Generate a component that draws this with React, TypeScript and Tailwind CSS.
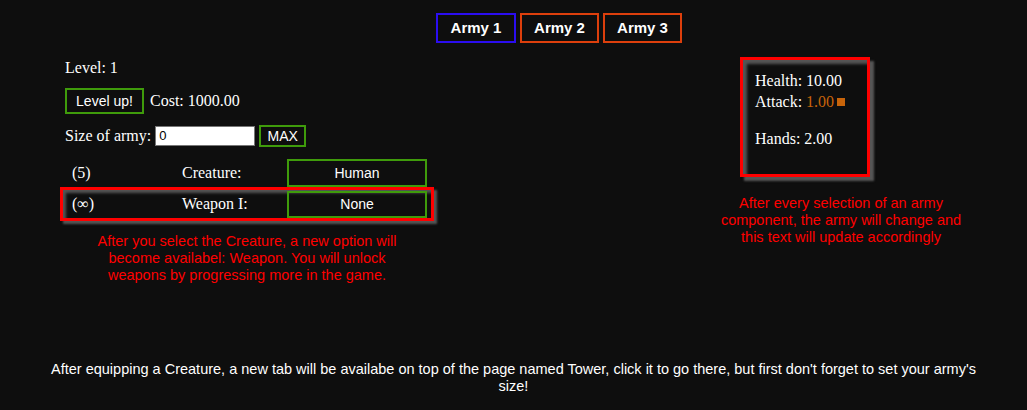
import React from "react";

const serif = { fontFamily: '"Liberation Serif", "Times New Roman", serif' };
const sans = { fontFamily: '"Liberation Sans", Arial, sans-serif' };

export default function App() {
  return (
    <div className="relative w-[1027px] h-[410px] bg-[#0e0e0e] text-white overflow-hidden" style={serif}>
      {/* Tabs */}
      <div className="flex justify-center gap-[4px] pt-[13px] pl-[91px]">
        <div className="w-[80px] h-[30px] border-2 border-[#2b0df0] flex items-center justify-center font-bold text-[15px]" style={sans}>Army 1</div>
        <div className="w-[79px] h-[30px] border-2 border-[#dd3f0c] flex items-center justify-center font-bold text-[15px]" style={sans}>Army 2</div>
        <div className="w-[79px] h-[30px] border-2 border-[#dd3f0c] flex items-center justify-center font-bold text-[15px]" style={sans}>Army 3</div>
      </div>

      <div className="flex">
        {/* Left panel */}
        <div className="ml-[60px] w-[374px]">
          <div className="mt-[16px] pl-[5px] text-[16px] leading-[18px]">Level: 1</div>
          <div className="mt-[11px] pl-[5px] flex items-center gap-[6px]">
            <div className="w-[79px] h-[26px] border-2 border-[#3f9b0b] flex items-center justify-center text-[14px]" style={sans}>Level up!</div>
            <span className="text-[16px]">Cost: 1000.00</span>
          </div>
          <div className="mt-[10px] pl-[5px] flex items-center">
            <span className="text-[16px]">Size of army:</span>
            <div className="ml-[4px] w-[100px] h-[20px] bg-white border border-[#767676] flex items-center pl-[3px] text-black text-[13px]" style={sans}>0</div>
            <div className="ml-[4px] w-[47px] h-[22px] border-2 border-[#3f9b0b] flex items-center justify-center text-[14px]" style={sans}>MAX</div>
          </div>

          <div className="mt-[11px]">
            <div className="flex items-center h-[28px]">
              <span className="pl-[12px] w-[122px] text-[16px]">(5)</span>
              <span className="w-[105px] text-[16px]">Creature:</span>
              <div className="w-[140px] h-[28px] border-2 border-[#3f9b0b] flex items-center justify-center text-[14px]" style={sans}>Human</div>
            </div>
            <div className="w-[374px] h-[34px] border-[3px] border-[#ff0000] shadow-[3px_3px_2px_#555,inset_3px_3px_3px_#555] flex items-center">
              <span className="pl-[9px] w-[119px] text-[16px]">(∞)</span>
              <span className="w-[105px] text-[16px]">Weapon I:</span>
              <div className="w-[140px] h-[27px] border-2 border-[#3f9b0b] flex items-center justify-center text-[14px]" style={sans}>None</div>
            </div>
          </div>

          <div className="mt-[12px] text-center text-[#ff0000] text-[14.5px] leading-[17px] px-[24px]" style={sans}>
            After you select the Creature, a new option will become availabel: Weapon. You will unlock weapons by progressing more in the game.
          </div>
        </div>

        {/* Right panel */}
        <div className="ml-[284px] w-[246px]">
          <div className="ml-[22px] mt-[14px] w-[130px] h-[120px] border-[3px] border-[#ff0000] shadow-[4px_4px_2px_#555,inset_4px_4px_3px_#555] pl-[12px] pt-[10px] text-[16px] leading-[21px]">
            <div>Health: 10.00</div>
            <div className="flex items-center">
              Attack:&nbsp;<span className="text-[#c8640a]">1.00</span>
              <span className="ml-[3px] inline-block w-[8px] h-[8px] bg-[#c8640a]"></span>
            </div>
            <div className="mt-[16px]">Hands: 2.00</div>
          </div>
          <div className="mt-[18px] text-center text-[#ff0000] text-[14.5px] leading-[17px]" style={sans}>
            After every selection of an army component, the army will change and this text will update accordingly
          </div>
        </div>
      </div>

      <div className="absolute left-0 top-[361px] w-[1027px] px-[40px] text-center text-[14.5px] leading-[17px]" style={sans}>
        After equipping a Creature, a new tab will be availabe on top of the page named Tower, click it to go there, but first don't forget to set your army's size!
      </div>
    </div>
  );
}
